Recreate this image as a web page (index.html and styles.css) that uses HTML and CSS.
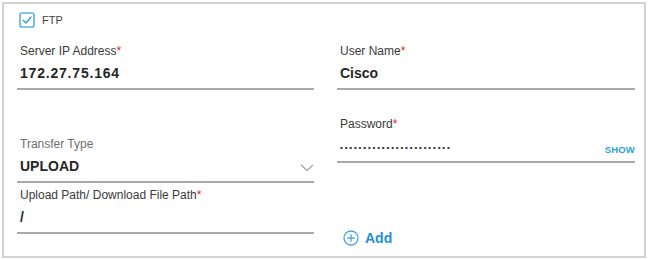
FILE: index.html
```html
<!DOCTYPE html>
<html>
<head>
<meta charset="utf-8">
<link rel="stylesheet" href="styles.css">
</head>
<body>
<div class="panel">
  <div class="check-row">
    <svg class="checkbox" width="16" height="16" viewBox="0 0 16 16"><rect x="1" y="1" width="14" height="14" rx="2" fill="#fff" stroke="#5db3e6" stroke-width="1.7"/><path d="M4.2 8.2 L7 11 L12 5" fill="none" stroke="#3d9fd9" stroke-width="1.5" stroke-linecap="round" stroke-linejoin="round"/></svg>
    <span class="check-label">FTP</span>
  </div>
  <div class="cols">
    <div class="col">
      <div class="field f-first">
        <div class="label">Server IP Address<span class="req">*</span></div>
        <div class="value ip">172.27.75.164</div>
      </div>
      <div class="field f-transfer">
        <div class="label light">Transfer Type</div>
        <div class="value select">UPLOAD
          <svg class="chev" width="14" height="8" viewBox="0 0 14 8"><path d="M1 1 L7 6.5 L13 1" fill="none" stroke="#a0a0a0" stroke-width="1.2"/></svg>
        </div>
      </div>
      <div class="field f-path">
        <div class="label">Upload Path/ Download File Path<span class="req">*</span></div>
        <div class="value">/</div>
      </div>
    </div>
    <div class="col">
      <div class="field f-first">
        <div class="label">User Name<span class="req">*</span></div>
        <div class="value">Cisco</div>
      </div>
      <div class="field f-pass">
        <div class="label">Password<span class="req">*</span></div>
        <div class="value pass"><span class="dots">••••••••••••••••••••••••</span><span class="show">SHOW</span></div>
      </div>
      <div class="add">
        <svg width="16" height="16" viewBox="0 0 16 16"><circle cx="8" cy="8" r="7" fill="none" stroke="#4aa8e0" stroke-width="1.3"/><path d="M8 4.2 V11.8 M4.2 8 H11.8" stroke="#4aa8e0" stroke-width="1.3"/></svg>
        <span>Add</span>
      </div>
    </div>
  </div>
</div>
</body>
</html>
```

FILE: styles.css
```css
html, body {
  margin: 0;
  padding: 0;
  background: #fff;
}
body {
  font-family: "Liberation Sans", Arial, sans-serif;
  color: #222;
}
.panel {
  margin: 2px;
  width: 644px;
  height: 256px;
  box-sizing: border-box;
  border: 2px solid #d2d2d2;
  padding: 8px 9px 0 13px;
}
.check-row {
  display: flex;
  align-items: center;
  height: 16px;
  padding-left: 2px;
}
.checkbox {
  display: block;
}
.check-label {
  font-size: 11px;
  color: #444;
  margin-left: 7px;
  line-height: 16px;
}
.cols {
  display: grid;
  grid-template-columns: 297px 298px;
  column-gap: 23px;
}
.col {
  display: flex;
  flex-direction: column;
}
.field .label {
  font-size: 12px;
  line-height: 14px;
  color: #3a3a3a;
  padding-left: 3px;
}
.field .label.light {
  color: #707070;
}
.req {
  color: #e2231a;
}
.field .value {
  margin-top: 6px;
  font-size: 14px;
  font-weight: bold;
  line-height: 18px;
  height: 18px;
  padding: 0 0 6px 3px;
  border-bottom: 2px solid #a9a9a9;
  color: #262626;
}
.f-first { margin-top: 16px; }
.f-transfer { margin-top: 47px; }
.f-path { margin-top: 5px; }
.f-pass { margin-top: 27px; }
.select {
  display: flex;
  justify-content: space-between;
  align-items: center;
}
.chev {
  display: block;
  margin-top: 3px;
}
.value.ip {
  letter-spacing: 0.8px;
}
.pass {
  display: flex;
  justify-content: space-between;
  align-items: center;
}
.dots {
  font-size: 8px;
  line-height: 18px;
  padding-top: 3px;
  letter-spacing: 1.85px;
  color: #333;
}
.show {
  align-self: flex-end;
  font-size: 9.5px;
  line-height: 11px;
  font-weight: bold;
  color: #2a9fd8;
  letter-spacing: 0.2px;
}
.add {
  display: flex;
  align-items: center;
  margin-top: 67px;
  padding-left: 6px;
  color: #1f8fd6;
  font-size: 14px;
  font-weight: bold;
}
.add svg {
  display: block;
  margin-right: 6px;
}
```
